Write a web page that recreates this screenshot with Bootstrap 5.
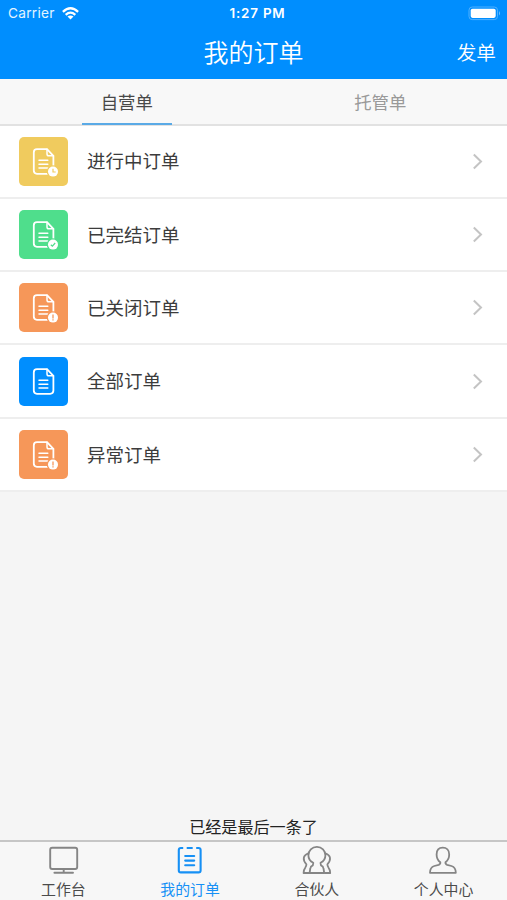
<!DOCTYPE html>
<html lang="zh-CN">
<head>
<meta charset="utf-8">
<meta name="viewport" content="width=device-width, initial-scale=1">
<title>我的订单</title>
<link href="https://cdn.jsdelivr.net/npm/bootstrap@5.3.0/dist/css/bootstrap.min.css" rel="stylesheet">
<style>
  body { font-family: Inter, "Noto Sans CJK SC", sans-serif; background: #f5f5f5; color: #3c3c3c; height: 900px; overflow: hidden; line-height: 1; }
  .top { background: #008efe; height: 79px; }
  .grid3 { display: grid; grid-template-columns: 1fr auto 1fr; align-items: center; }
  .status { height: 27px; padding: 0 6px 0 8px; }
  .carrier { font-size: 13.7px; letter-spacing: .25px; color: #e3f4ff; padding-top: 1px; }
  .wifi { margin-left: 7px; }
  .clock { font-size: 13.4px; letter-spacing: .8px; padding-left: 6px; padding-top: 1px; }
  .title-bar { height: 52px; padding: 0 11px; }
  .title { font-size: 25px; font-weight: 350; }
  .send { font-size: 19.7px; font-weight: 350; padding-top: 1px; }
  .tabs { height: 47px; background: #f8f8f8; border-bottom: 2px solid #e2e2e2; }
  .tabs a { font-size: 17.4px; color: #999; margin-bottom: -2px; }
  .tabs .active span { color: #484848; border-color: #5aaae6; }
  .tabs span { width: 90px; height: 46px; padding-top: 3px; border-bottom: 2px solid transparent; }
  .orders { margin-top: -.5px; }
  .orders a { height: 73.3px; border-bottom: 2px solid #eee; padding: 0 24px 0 19px; color: #3c3c3c; font-size: 18.5px; }
  .tile { width: 49px; height: 49px; border-radius: 5px; color: #fff; }
  .yellow { background: #f0cb5e; --tile: #f0cb5e; }
  .green { background: #4fde8c; --tile: #4fde8c; }
  .orange { background: #f69759; --tile: #f69759; }
  .blue { background: #008efe; --tile: #008efe; }
  .label { margin-left: 19px; padding-top: 1px; }
  .end-note { font-size: 16.1px; color: #222; padding-bottom: 5px; }
  .bottom { height: 60px; background: #f7f7f7; border-top: 2px solid #c6c6c6; }
  .bottom a { font-size: 14.9px; color: #4b4b4b; padding-top: 2px; }
  .bottom a svg { margin-bottom: 7px; color: #858585; }
  .bottom a.on, .bottom a.on svg { color: #1690f5; }
</style>
<script src="https://cdn.jsdelivr.net/npm/bootstrap@5.3.0/dist/js/bootstrap.bundle.min.js"></script>
</head>
<body class="d-flex flex-column">
<svg width="0" height="0" class="d-none">
  <symbol id="doc" viewBox="0 0 49 49"><g fill="none" stroke="currentColor" stroke-linejoin="round" stroke-linecap="round">
    <path stroke-width="1.8" d="M28 12.2H18Q14.8 12.2 14.8 15.4V33.6Q14.8 36.8 18 36.8H31.2Q34.4 36.8 34.4 33.6V18.8Z"/>
    <path stroke-width="1.5" d="M28 12.2V17Q28 18.8 29.8 18.8H34.4"/>
    <path stroke-width="1.5" d="M20 23.3H28.8M20 27.2H28.8M20 31.1H28.8"/></g></symbol>
  <symbol id="badge-dot" viewBox="0 0 49 49"><circle cx="34" cy="34.6" r="6.3" fill="var(--tile)"/><circle cx="34" cy="34.6" r="5" fill="currentColor"/></symbol>
</svg>

<header class="top text-white flex-shrink-0">
  <div class="status grid3">
    <div class="d-flex align-items-center"><span class="carrier">Carrier</span>
      <svg class="wifi" width="17" height="13" viewBox="0 0 17 13" fill="none" stroke="#fff" stroke-width="2.3"><path d="M.9 4.8Q8.5-2.2 16.1 4.8M3.7 7.8Q8.5 3.5 13.3 7.8"/><path stroke="none" fill="#fff" d="M5.5 9.6Q8.5 7.2 11.5 9.6L8.5 12.6Z"/></svg></div>
    <div class="clock fw-semibold">1:27 PM</div>
    <svg class="ms-auto" width="33" height="15" viewBox="0 0 33 15"><rect x="1" y="1" width="28.5" height="12.6" rx="3.2" fill="none" stroke="#4fb0ff"/><rect x="2.7" y="2.7" width="25" height="9.2" rx="1.8" fill="#fff"/><path d="M31 5q2 2.3 0 4.6z" fill="#70bfff"/></svg>
  </div>
  <div class="title-bar grid3"><span></span><h1 class="title mb-0">我的订单</h1><span class="send text-end">发单</span></div>
</header>

<nav class="tabs d-flex flex-shrink-0">
  <a href="#" class="active col-6 d-flex justify-content-center text-decoration-none"><span class="d-flex align-items-center justify-content-center">自营单</span></a>
  <a href="#" class="col-6 d-flex justify-content-center text-decoration-none"><span class="d-flex align-items-center justify-content-center">托管单</span></a>
</nav>

<main class="orders flex-grow-1 d-flex flex-column">
  <a href="#" class="d-flex align-items-center bg-white text-decoration-none"><svg class="tile yellow"><use href="#doc"/><use href="#badge-dot"/><path d="M34 31.8V35H36.7" fill="none" stroke="var(--tile)" stroke-width="1.2"/></svg><span class="label me-auto">进行中订单</span><svg width="11" height="17" fill="none" stroke="#c4c4c4" stroke-width="2"><path d="M1.8 1.5L9 8.5L1.8 15.5"/></svg></a>
  <a href="#" class="d-flex align-items-center bg-white text-decoration-none"><svg class="tile green"><use href="#doc"/><use href="#badge-dot"/><path d="M31.8 34.7L33.4 36.2L36.2 33" fill="none" stroke="var(--tile)" stroke-width="1.2"/></svg><span class="label me-auto">已完结订单</span><svg width="11" height="17" fill="none" stroke="#c4c4c4" stroke-width="2"><path d="M1.8 1.5L9 8.5L1.8 15.5"/></svg></a>
  <a href="#" class="d-flex align-items-center bg-white text-decoration-none"><svg class="tile orange"><use href="#doc"/><use href="#badge-dot"/><path d="M34 31.5V35.4M34 36.3V37.6" fill="none" stroke="var(--tile)" stroke-width="1.3"/></svg><span class="label me-auto">已关闭订单</span><svg width="11" height="17" fill="none" stroke="#c4c4c4" stroke-width="2"><path d="M1.8 1.5L9 8.5L1.8 15.5"/></svg></a>
  <a href="#" class="d-flex align-items-center bg-white text-decoration-none"><svg class="tile blue"><use href="#doc"/></svg><span class="label me-auto">全部订单</span><svg width="11" height="17" fill="none" stroke="#c4c4c4" stroke-width="2"><path d="M1.8 1.5L9 8.5L1.8 15.5"/></svg></a>
  <a href="#" class="d-flex align-items-center bg-white text-decoration-none"><svg class="tile orange"><use href="#doc"/><use href="#badge-dot"/><path d="M34 31.5V35.4M34 36.3V37.6" fill="none" stroke="var(--tile)" stroke-width="1.3"/></svg><span class="label me-auto">异常订单</span><svg width="11" height="17" fill="none" stroke="#c4c4c4" stroke-width="2"><path d="M1.8 1.5L9 8.5L1.8 15.5"/></svg></a>
  <div class="end-note text-center mt-auto">已经是最后一条了</div>
</main>

<nav class="bottom d-flex flex-shrink-0">
  <a href="#" class="col-3 d-flex flex-column align-items-center text-decoration-none">
    <svg width="32" height="32" fill="none" stroke="currentColor" stroke-width="1.9" stroke-linecap="round"><rect x="3.2" y="3.7" width="27" height="21.3" rx="2"/><path d="M16.7 25V28.5M7.4 28.7H26"/></svg>工作台</a>
  <a href="#" class="on col-3 d-flex flex-column align-items-center text-decoration-none">
    <svg width="32" height="32" fill="none" stroke="currentColor" stroke-width="2.1"><path d="M9.2 4H6.8Q4.8 4 4.8 6V26.4Q4.8 28.4 6.8 28.4H24.6Q26.6 28.4 26.6 26.4V6Q26.6 4 24.6 4H22.2M12.7 4H18.7"/><path stroke-linecap="round" d="M11.2 12H20.2M11.2 16.6H20.2M11.2 21.3H20.2"/></svg>我的订单</a>
  <a href="#" class="col-3 d-flex flex-column align-items-center text-decoration-none">
    <svg width="32" height="32" fill="none" stroke="currentColor" stroke-width="1.8" stroke-linejoin="round"><path d="M12.3 18.8C9.2 17.4 7.4 14.6 7.4 11.3C7.4 6.5 11 2.9 15.9 2.9S24.4 6.5 24.4 11.3C24.4 14.6 22.6 17.4 19.5 18.8L20 21.4Q22.3 22.2 22.6 25L23.2 29H8.6L9.2 25Q9.5 22.2 11.8 21.4Z"/><path d="M7.4 9.3C1.8 11.2 1.4 16.2 5.4 20.3Q5.4 22.3 4.2 23.8Q2.8 25.4 2.6 29H8.8M24.4 9.3C30 11.2 30.4 16.2 26.4 20.3Q26.4 22.3 27.6 23.8Q29 25.4 29.2 29H23.2"/></svg>合伙人</a>
  <a href="#" class="col-3 d-flex flex-column align-items-center text-decoration-none">
    <svg width="32" height="32" fill="none" stroke="currentColor" stroke-width="1.8" stroke-linejoin="round"><path d="M12.3 18.3C9.7 16.4 8.6 13.4 8.6 10.5C8.6 6.2 11.1 3.7 14.8 3.7S21.2 6.2 21.2 10.5C21.2 13.4 20 16.4 17.5 18.3Q17.1 20 19.1 20.8L23.5 22Q27.8 23.3 27.8 28.8H2Q2 23.3 6.3 22L10.7 20.8Q12.7 20 12.3 18.3Z"/></svg>个人中心</a>
</nav>
</body>
</html>
